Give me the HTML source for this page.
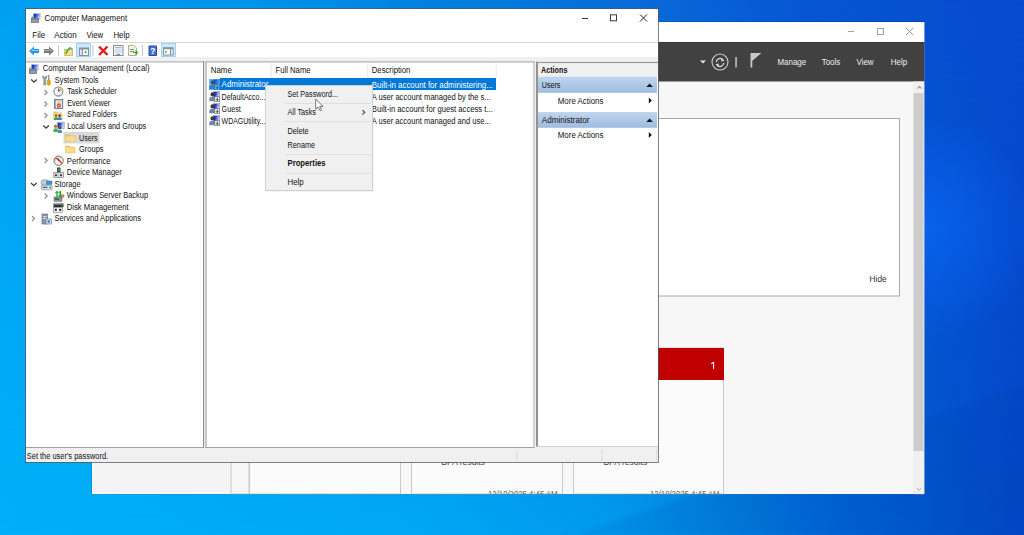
<!DOCTYPE html>
<html><head><meta charset="utf-8"><style>*{margin:0;padding:0}html,body{width:1024px;height:535px;overflow:hidden;background:#0090e8}svg{display:block;font-family:"Liberation Sans",sans-serif}</style></head>
<body><svg width="1024" height="535" viewBox="0 0 1024 535" font-family="Liberation Sans">
<defs>
<linearGradient id="bgb" gradientUnits="userSpaceOnUse" x1="0" y1="0" x2="1024" y2="0">
<stop offset="0" stop-color="#00b0f8"/><stop offset="0.39" stop-color="#00a8f4"/><stop offset="0.6" stop-color="#009aee"/><stop offset="0.7" stop-color="#0084e2"/><stop offset="0.82" stop-color="#0066d6"/><stop offset="1" stop-color="#0448c8"/></linearGradient>
<linearGradient id="bgt" gradientUnits="userSpaceOnUse" x1="0" y1="0" x2="1024" y2="0">
<stop offset="0" stop-color="#00a0f0"/><stop offset="0.24" stop-color="#0094ea"/><stop offset="0.5" stop-color="#0078dc"/><stop offset="0.64" stop-color="#0868d8"/><stop offset="0.78" stop-color="#0656d2"/><stop offset="1" stop-color="#064ad0"/></linearGradient>
<linearGradient id="vg" gradientUnits="userSpaceOnUse" x1="0" y1="0" x2="0" y2="535"><stop offset="0" stop-color="#fff"/><stop offset="1" stop-color="#000"/></linearGradient>
<mask id="vm" maskUnits="userSpaceOnUse" x="0" y="0" width="1024" height="535"><rect width="1024" height="535" fill="url(#vg)"/></mask>
<radialGradient id="glow" gradientUnits="userSpaceOnUse" cx="922" cy="228" r="115">
<stop offset="0" stop-color="#0a68f8" stop-opacity="0.7"/><stop offset="1" stop-color="#0a68f8" stop-opacity="0"/></radialGradient>
<linearGradient id="sec" x1="0" y1="0" x2="0" y2="1"><stop offset="0" stop-color="#c0d6ee"/><stop offset="1" stop-color="#9ebce0"/></linearGradient>
<linearGradient id="scr" x1="0" y1="0" x2="1" y2="0.3"><stop offset="0" stop-color="#0010c8"/><stop offset="0.45" stop-color="#3050e0"/><stop offset="1" stop-color="#b8c8f4"/></linearGradient>
<filter id="blr" x="-10%" y="-10%" width="120%" height="120%"><feGaussianBlur stdDeviation="2"/></filter>
<clipPath id="smclip"><rect x="92" y="22" width="832.5" height="472.3"/></clipPath>
</defs>
<rect x="0" y="0" width="1024" height="535" fill="url(#bgb)"/>
<rect x="0" y="0" width="1024" height="535" fill="url(#bgt)" mask="url(#vm)"/>
<path d="M560 540L1024 385V535H560Z" fill="#003090" opacity="0.1" filter="url(#blr)"/>
<rect x="800" y="90" width="224" height="280" fill="url(#glow)"/>
<rect x="91.5" y="21.5" width="833" height="473" fill="none" stroke="rgba(0,0,0,0.12)" stroke-width="1"/>
<g clip-path="url(#smclip)">
<rect x="92" y="22" width="832.5" height="472.3" fill="#f7f7f7"/>
<rect x="92" y="22" width="832.5" height="20" fill="#ffffff"/>
<rect x="848" y="31" width="6" height="1" fill="#a0a0a0"/>
<rect x="877.5" y="28.5" width="6" height="6" fill="none" stroke="#a0a0a0" stroke-width="1"/>
<path d="M906 28L913 35M913 28L906 35" stroke="#909090" stroke-width="0.9"/>
<rect x="92" y="42" width="832.5" height="39.5" fill="#414141"/>
<rect x="92" y="42" width="832" height="1" fill="#363636"/>
<path d="M700 60.5H706L703 63.5Z" fill="#e6e6e6"/>
<circle cx="720" cy="62" r="8" fill="none" stroke="#cfcfcf" stroke-width="1.1"/>
<path d="M716.3 62A3.8 3.8 0 0 1 723 59.8M723.7 63A3.8 3.8 0 0 1 717 65.2" fill="none" stroke="#dcdcdc" stroke-width="1.3"/>
<path d="M721.5 58L724.6 60.7L721.2 61.5Z M718.5 67L715.4 64.3L718.8 63.5Z" fill="#dcdcdc"/>
<rect x="735.3" y="57" width="1.5" height="10.5" fill="#c8c8c8"/>
<rect x="750.5" y="53" width="1.8" height="14.5" fill="#c8c8c8"/>
<path d="M752 53H761.5L752 61Z" fill="#c8c8c8"/>
<text x="777.5" y="65" font-size="8.5" fill="#f0f0f0" textLength="28.6" lengthAdjust="spacingAndGlyphs">Manage</text>
<text x="821.8" y="65" font-size="8.5" fill="#f0f0f0" textLength="18.4" lengthAdjust="spacingAndGlyphs">Tools</text>
<text x="856.5" y="65" font-size="8.5" fill="#f0f0f0" textLength="17.1" lengthAdjust="spacingAndGlyphs">View</text>
<text x="890.7" y="65" font-size="8.5" fill="#f0f0f0" textLength="16.5" lengthAdjust="spacingAndGlyphs">Help</text>
<rect x="92" y="118.5" width="807.5" height="177.5" fill="#ffffff" stroke="#a8a8a8" stroke-width="1"/>
<text x="869.6" y="281.5" font-size="8.5" fill="#333" textLength="17.0" lengthAdjust="spacingAndGlyphs">Hide</text>
<rect x="92" y="440" width="139" height="54" fill="#f4f4f4"/>
<rect x="231" y="440" width="18" height="54" fill="#f6f6f6" stroke="#c8c8c8" stroke-width="1"/>
<rect x="249.5" y="330" width="151" height="164" fill="#fbfbfb" stroke="#c8c8c8" stroke-width="1"/>
<rect x="411.5" y="330" width="151" height="164" fill="#fbfbfb" stroke="#c8c8c8" stroke-width="1"/>
<rect x="573.5" y="348" width="150" height="146" fill="#fbfbfb" stroke="#c8c8c8" stroke-width="1"/>
<rect x="573" y="348" width="151" height="32" fill="#c00000"/>
<path d="M713.6 362V369M713.6 362.2L711.2 363.8" stroke="#fff" stroke-width="1.1" fill="none"/>
<text x="441.3" y="465" font-size="8.5" fill="#444" textLength="43.6" lengthAdjust="spacingAndGlyphs">BPA results</text>
<text x="603.6" y="465" font-size="8.5" fill="#444" textLength="43.6" lengthAdjust="spacingAndGlyphs">BPA results</text>
<text x="488" y="497" font-size="8.5" fill="#666" textLength="69.6" lengthAdjust="spacingAndGlyphs">12/10/2025 4:45 AM</text>
<text x="650" y="497" font-size="8.5" fill="#666" textLength="69.6" lengthAdjust="spacingAndGlyphs">12/10/2025 4:45 AM</text>
<rect x="913" y="81.5" width="11.5" height="413" fill="#f0f0f0"/>
<rect x="913.5" y="93" width="10" height="358" fill="#cdcdcd"/>
<path d="M917.2 88.6L919.5 86.3L921.8 88.6" fill="none" stroke="#a4a4a4" stroke-width="1.1"/>
<path d="M917 488L919.2 490.2L921.4 488" fill="none" stroke="#a0a0a0" stroke-width="0.9"/>
</g>
<rect x="25.5" y="8.5" width="633" height="454" fill="#ffffff" stroke="rgba(0,0,20,0.5)" stroke-width="1"/>
<g transform="translate(30.9,13)"><rect x="2" y="0" width="8" height="6.7" fill="#d6d2c4"/><rect x="2.8" y="0.8" width="6.4" height="5" fill="url(#scr)"/><rect x="0" y="5" width="8" height="5" rx="0.6" fill="#76808a"/><rect x="1" y="6.8" width="6" height="0.8" fill="#a8b0b8"/><rect x="1" y="8.4" width="6" height="0.8" fill="#a8b0b8"/><circle cx="1.3" cy="4.2" r="0.9" fill="#58c058"/></g>
<text x="44.5" y="21.2" font-size="9" fill="#111" textLength="82.6" lengthAdjust="spacingAndGlyphs">Computer Management</text>
<rect x="582" y="18" width="6" height="1" fill="#333"/>
<rect x="610.5" y="14.8" width="6" height="6" fill="none" stroke="#3a3a3a" stroke-width="1"/>
<path d="M640 14.5L647 21.5M647 14.5L640 21.5" stroke="#222" stroke-width="1"/>
<text x="32.3" y="37.8" font-size="8.5" fill="#111" textLength="12.8" lengthAdjust="spacingAndGlyphs">File</text>
<text x="54.3" y="37.8" font-size="8.5" fill="#111" textLength="22.4" lengthAdjust="spacingAndGlyphs">Action</text>
<text x="86.5" y="37.8" font-size="8.5" fill="#111" textLength="16.7" lengthAdjust="spacingAndGlyphs">View</text>
<text x="113.4" y="37.8" font-size="8.5" fill="#111" textLength="16.2" lengthAdjust="spacingAndGlyphs">Help</text>
<rect x="26" y="42" width="632" height="1" fill="#dadada"/>
<path d="M29 51L34 46.5V49H39V53H34V55.5Z" fill="#1e98e6"/><path d="M30.5 51L33.5 48.5V50H38.5V51Z" fill="#86ccf8"/>
<path d="M54 51L49 46.5V49H44V53H49V55.5Z" fill="#7a7a7a"/><path d="M52.5 51L49.5 48.5V50H44.5V51Z" fill="#acacac"/>
<rect x="58" y="45" width="1" height="11" fill="#c4c4c4"/>
<rect x="64" y="49" width="9" height="7" fill="#e4bc5c"/><rect x="65" y="50" width="7" height="5" fill="#f8dc98"/><path d="M66 54Q67 49.5 71 47.5" stroke="#3cb83c" stroke-width="1.8" fill="none"/><rect x="71" y="48" width="1.5" height="1.5" fill="#4aa0e0"/>
<rect x="76.5" y="43.5" width="14" height="13" fill="#cce8ff" stroke="#99d1ff" stroke-width="1"/>
<rect x="79" y="47.5" width="10" height="8.5" fill="#8c9198"/><rect x="80" y="49.5" width="2" height="5.5" fill="#dde4ec"/><rect x="83" y="49.5" width="5" height="5.5" fill="#fff"/><path d="M84.2 52.2L86.4 50.6V53.8Z" fill="#2ca82c"/>
<rect x="92.5" y="45" width="1" height="11" fill="#c4c4c4"/>
<path d="M99 46.5L107.5 55M107.5 46.5L99 55" stroke="#e41a1a" stroke-width="2.4"/>
<rect x="113.5" y="45.5" width="9.5" height="10" fill="#f2f4f6" stroke="#8c8c8c" stroke-width="1"/><rect x="115" y="47" width="6.5" height="1.2" fill="#a8b0c0"/><rect x="115" y="49" width="6.5" height="4.5" fill="#d4e2f0"/><rect x="116.5" y="54" width="3.5" height="1.2" fill="#3aa0e0"/>
<path d="M128.5 45.5H134L136.5 48V55.5H128.5Z" fill="#f6f2de" stroke="#b4ac94" stroke-width="1"/><rect x="130" y="49" width="4" height="1" fill="#888"/><rect x="130" y="51" width="4" height="1" fill="#888"/><path d="M133 52H135.5V50L138.5 52.5L135.5 55V53H133Z" fill="#30b030"/>
<rect x="142" y="45" width="1" height="11" fill="#c4c4c4"/>
<rect x="148.5" y="45.5" width="8.5" height="10.5" rx="1" fill="#2646b0"/><rect x="149.5" y="46.5" width="6.5" height="8.5" fill="#4a6fd6"/><text x="152.8" y="54" font-size="8.5" font-family="Liberation Sans" font-weight="bold" fill="#fff" text-anchor="middle">?</text>
<rect x="161.5" y="43.5" width="14" height="13" fill="#cce8ff" stroke="#99d1ff" stroke-width="1"/>
<rect x="163" y="47.2" width="10.6" height="8.3" fill="#8c9198"/><rect x="164" y="49.2" width="6" height="5.3" fill="#fff"/><rect x="171" y="49.2" width="1.8" height="5.3" fill="#dde4ec"/><path d="M165.2 50.5L167.2 51.9L165.2 53.3Z" fill="#2ca82c"/>
<rect x="26" y="57" width="632" height="5" fill="#f0f0f0"/>
<rect x="26" y="62" width="632" height="386" fill="#f0f0f0"/>
<rect x="26" y="61.5" width="178" height="386" fill="#ffffff"/>
<rect x="26" y="61" width="178" height="1.7" fill="#c8c8cc"/>
<rect x="203" y="61" width="1.1" height="387" fill="#8a8a90"/>
<rect x="204.1" y="61" width="1.1" height="387" fill="#e8e8e8"/>
<rect x="26" y="447" width="178" height="1" fill="#a0a0a0"/>
<rect x="205.2" y="61.5" width="329.3" height="386" fill="#ffffff"/>
<rect x="205.2" y="61" width="329" height="1.7" fill="#c4c4c8"/>
<rect x="205.2" y="61" width="1.6" height="387" fill="#b8b8c0"/>
<rect x="533.5" y="61" width="1" height="387" fill="#a8a8a8"/>
<rect x="205.2" y="447" width="329" height="1" fill="#a0a0a0"/>
<rect x="536" y="61.5" width="122" height="385" fill="#ffffff"/>
<rect x="536" y="61.8" width="122" height="1.5" fill="#9a9a9a"/>
<rect x="536" y="61.8" width="2" height="385" fill="#929292"/>
<rect x="537" y="446" width="121" height="1" fill="#cfcfcf"/>
<rect x="26" y="448" width="632" height="14" fill="#f0f0f0"/>
<text x="26.8" y="458.8" font-size="8.5" fill="#111" textLength="81.3" lengthAdjust="spacingAndGlyphs">Set the user&#39;s password.</text>
<rect x="516.5" y="449" width="1" height="12" fill="#dcdcdc"/>
<rect x="601.5" y="449" width="1" height="12" fill="#dcdcdc"/>
<rect x="656" y="449" width="1" height="12" fill="#dcdcdc"/>
<g transform="translate(28.9,64)"><rect x="2" y="0" width="8" height="6.7" fill="#d6d2c4"/><rect x="2.8" y="0.8" width="6.4" height="5" fill="url(#scr)"/><rect x="0" y="5" width="8" height="5" rx="0.6" fill="#76808a"/><rect x="1" y="6.8" width="6" height="0.8" fill="#a8b0b8"/><rect x="1" y="8.4" width="6" height="0.8" fill="#a8b0b8"/><circle cx="1.3" cy="4.2" r="0.9" fill="#58c058"/></g>
<text x="42.7" y="71.4" font-size="8.5" fill="#111" textLength="106.8" lengthAdjust="spacingAndGlyphs">Computer Management (Local)</text>
<path d="M31.2 79.5L34.0 82.2L36.8 79.5" fill="none" stroke="#3a3a3a" stroke-width="1.3"/>
<g transform="translate(42.5,75)"><path d="M0.3 0.5V2.5Q0.3 3.5 1.3 3.8V10H3.2V3.8Q4.2 3.5 4.2 2.5V0.5L3.2 1.5V2.3H1.3V1.5Z" fill="#9aa2aa" stroke="#6a727a" stroke-width="0.5"/><rect x="5.6" y="0" width="1.3" height="5" fill="#8a8f96"/><rect x="4.8" y="4.8" width="3" height="5.4" rx="1" fill="#f0a800" stroke="#b07800" stroke-width="0.4"/></g>
<text x="54.8" y="82.9" font-size="8.5" fill="#111" textLength="43.7" lengthAdjust="spacingAndGlyphs">System Tools</text>
<path d="M44.5 90L47.0 92.5L44.5 95" fill="none" stroke="#8e8e8e" stroke-width="1.2"/>
<circle cx="58.4" cy="91.5" r="4.5" fill="#fafafa" stroke="#9a9ea6" stroke-width="1.3"/><path d="M58.4 87.6A3.9 3.9 0 0 1 62.3 91.5H58.4Z" fill="#f2d070" opacity="0.85"/><path d="M58.4 88.4V91.5L60.6 89.6" stroke="#404040" stroke-width="0.75" fill="none"/>
<text x="67.2" y="94" font-size="8.5" fill="#111" textLength="49.6" lengthAdjust="spacingAndGlyphs">Task Scheduler</text>
<path d="M44.5 101.5L47.0 104.0L44.5 106.5" fill="none" stroke="#8e8e8e" stroke-width="1.2"/>
<rect x="54.6" y="99.4" width="8.2" height="9.2" fill="#8ea2c6" stroke="#5a6a94" stroke-width="0.7"/><rect x="55.9" y="100.4" width="6" height="7.4" fill="#e6ecf6"/><path d="M58.9 100.6L61.2 104.4H56.6Z" fill="#f0c030"/><circle cx="58.9" cy="105.7" r="2" fill="#e03a3a"/><rect x="57.9" y="105.4" width="2" height="0.7" fill="#fff"/>
<text x="67.2" y="105.8" font-size="8.5" fill="#111" textLength="43.1" lengthAdjust="spacingAndGlyphs">Event Viewer</text>
<path d="M44.5 113L47.0 115.5L44.5 118" fill="none" stroke="#8e8e8e" stroke-width="1.2"/>
<path d="M53.3 111.5H56.5L57.5 112.5H62.3V120H53.3Z" fill="#e8c460"/><rect x="53.9" y="113.1" width="7.8" height="6.3" fill="#f8dc92"/><circle cx="56" cy="115.6" r="1.3" fill="#8a5a30"/><circle cx="59.6" cy="115.6" r="1.3" fill="#6a4428"/><path d="M54 120V118.6Q54 117.2 56 117.2Q58 117.2 58 118.6V120Z" fill="#3aa848"/><path d="M57.6 120V118.6Q57.6 117.2 59.6 117.2Q61.6 117.2 61.6 118.6V120Z" fill="#3a86d4"/>
<text x="67.2" y="117.2" font-size="8.5" fill="#111" textLength="49.6" lengthAdjust="spacingAndGlyphs">Shared Folders</text>
<path d="M43.3 125.5L46.099999999999994 128.2L48.9 125.5" fill="none" stroke="#3a3a3a" stroke-width="1.3"/>
<rect x="57.2" y="122.2" width="7" height="6.3" fill="#d8dce4" stroke="#8a92a4" stroke-width="0.6"/><rect x="57.9" y="122.9" width="5.6" height="4.9" fill="url(#scr)"/><circle cx="55.6" cy="126.2" r="1.7" fill="#b07a48"/><path d="M53.4 132V130Q53.4 128.2 55.6 128.2Q57.8 128.2 57.8 130V132Z" fill="#48b048"/><circle cx="59.8" cy="127.6" r="1.6" fill="#704830"/><path d="M57.6 133V131.2Q57.6 129.5 59.8 129.5Q62 129.5 62 131.2V133Z" fill="#4a8ad8"/>
<text x="67.2" y="128.7" font-size="8.5" fill="#111" textLength="79.1" lengthAdjust="spacingAndGlyphs">Local Users and Groups</text>
<rect x="63.5" y="132" width="36" height="11.5" fill="#d9d9d9"/>
<path d="M65.3 134.6H69.3L70.3 135.6H75.3V142.1H65.3Z" fill="#e6c15e"/><rect x="65.89999999999999" y="136.2" width="8.8" height="5.3" fill="#f8dc8c"/>
<text x="79" y="140.5" font-size="8.5" fill="#111" textLength="18.6" lengthAdjust="spacingAndGlyphs">Users</text>
<path d="M65.3 145.8H69.3L70.3 146.8H75.3V153.3H65.3Z" fill="#e6c15e"/><rect x="65.89999999999999" y="147.4" width="8.8" height="5.3" fill="#f8dc8c"/>
<text x="79" y="152" font-size="8.5" fill="#111" textLength="24.6" lengthAdjust="spacingAndGlyphs">Groups</text>
<path d="M44.7 158L47.2 160.5L44.7 163" fill="none" stroke="#8e8e8e" stroke-width="1.2"/>
<circle cx="58.6" cy="160.7" r="4.7" fill="#f8f8f8" stroke="#707070" stroke-width="1"/><path d="M55.5 161.5A3.2 3.2 0 0 1 61.5 159" stroke="#7ac080" stroke-width="0.7" fill="none"/><path d="M55.6 157.6L58.4 160.2L58 158.6L61.8 163.6" stroke="#e02020" stroke-width="1.2" fill="none"/>
<text x="66.8" y="163.8" font-size="8.5" fill="#111" textLength="43.8" lengthAdjust="spacingAndGlyphs">Performance</text>
<rect x="57" y="167.5" width="3.5" height="5" fill="#3a3a3a"/><rect x="58" y="168.5" width="1.5" height="2.5" fill="#3cc040"/><rect x="53.8" y="172.5" width="9.6" height="5" fill="#d0d0d0" stroke="#777" stroke-width="0.6"/><rect x="55" y="174.5" width="2" height="1.5" fill="#333"/><rect x="60" y="174.5" width="2" height="1.5" fill="#333"/>
<text x="66.8" y="175" font-size="8.5" fill="#111" textLength="55.0" lengthAdjust="spacingAndGlyphs">Device Manager</text>
<path d="M31 183L33.8 185.7L36.6 183" fill="none" stroke="#3a3a3a" stroke-width="1.3"/>
<rect x="41.2" y="179.8" width="7.5" height="5.6" rx="2.5" fill="#c4ccd4" stroke="#7a8490" stroke-width="0.6"/><rect x="46.6" y="181" width="5.4" height="3.6" rx="0.8" fill="#3a94dc" stroke="#2a6aa8" stroke-width="0.5"/><rect x="41.2" y="185.2" width="11" height="4.6" rx="1" fill="#d8dee4" stroke="#7a8490" stroke-width="0.6"/><rect x="42.5" y="186.8" width="5" height="1.2" fill="#5a6470"/><circle cx="50.3" cy="187.5" r="0.9" fill="#3cb040"/>
<text x="54.5" y="186.8" font-size="8.5" fill="#111" textLength="26.1" lengthAdjust="spacingAndGlyphs">Storage</text>
<path d="M44.7 193.5L47.2 196.0L44.7 198.5" fill="none" stroke="#8e8e8e" stroke-width="1.2"/>
<rect x="54" y="197" width="8" height="4.3" fill="#8e969e" stroke="#5a626a" stroke-width="0.5"/><rect x="55" y="198.6" width="4" height="1" fill="#333"/><path d="M56.2 197.5V193H54.6L57 190.4L59.4 193H57.8V197.5Z" fill="#38b838"/><path d="M59.4 191V195.6H57.9L60.3 198.2L62.7 195.6H61.1V191Z" fill="#2ea02e"/><circle cx="62.6" cy="196" r="1.6" fill="#c89050" stroke="#666" stroke-width="0.4"/>
<text x="66.8" y="198.3" font-size="8.5" fill="#111" textLength="81.3" lengthAdjust="spacingAndGlyphs">Windows Server Backup</text>
<rect x="53.5" y="203.5" width="10" height="3.8" rx="0.6" fill="#2e2e2e"/><rect x="54.3" y="204.1" width="8.4" height="0.9" fill="#8a8a8a"/><rect x="61.3" y="205.5" width="1.4" height="1" fill="#3cc040"/><rect x="53.5" y="207.3" width="9" height="5" fill="#f2f2f2" stroke="#7a7a7a" stroke-width="0.6"/><rect x="54.8" y="208.8" width="2" height="2" fill="#222"/><rect x="59.2" y="208.8" width="2" height="2" fill="#222"/>
<text x="66.8" y="209.5" font-size="8.5" fill="#111" textLength="61.8" lengthAdjust="spacingAndGlyphs">Disk Management</text>
<path d="M32 216L34.5 218.5L32 221" fill="none" stroke="#8e8e8e" stroke-width="1.2"/>
<rect x="42" y="214" width="5.5" height="10" fill="#8898a8" stroke="#5a6878" stroke-width="0.6"/><rect x="43" y="216" width="3.5" height="1" fill="#dde"/><rect x="43" y="218" width="3.5" height="1" fill="#dde"/><rect x="46" y="219" width="5.5" height="5" fill="#d8e0e8" stroke="#6a7888" stroke-width="0.6"/><circle cx="48.8" cy="221.5" r="1.3" fill="#2a80d0"/>
<text x="54.5" y="221.3" font-size="8.5" fill="#111" textLength="86.6" lengthAdjust="spacingAndGlyphs">Services and Applications</text>
<text x="210.8" y="73.3" font-size="8.5" fill="#111" textLength="21.0" lengthAdjust="spacingAndGlyphs">Name</text>
<rect x="270.5" y="62" width="1" height="16" fill="#e5e5e5"/>
<text x="275.5" y="73.3" font-size="8.5" fill="#111" textLength="35.1" lengthAdjust="spacingAndGlyphs">Full Name</text>
<rect x="367.3" y="62" width="1" height="16" fill="#e5e5e5"/>
<text x="371.8" y="73.3" font-size="8.5" fill="#111" textLength="38.6" lengthAdjust="spacingAndGlyphs">Description</text>
<rect x="495.6" y="62" width="1" height="16" fill="#e5e5e5"/>
<rect x="220" y="78" width="276" height="12" fill="#0078d7"/>
<g transform="translate(209,79)"><rect x="4.3" y="0.3" width="6.4" height="7.2" fill="#e4e8ee" stroke="#8890a0" stroke-width="0.6"/><rect x="5" y="1" width="5" height="5.6" fill="url(#scr)"/><circle cx="3.6" cy="3.4" r="2.1" fill="#4a3428"/><path d="M0.3 10.3V8Q0.3 5.8 3.6 5.8Q6.9 5.8 6.9 8V10.3Z" fill="#7088a8"/><rect x="5.8" y="5.8" width="4.9" height="4.9" fill="#fafafa" stroke="#606060" stroke-width="0.6"/><path d="M8.25 6.6V9.4M7 8.3L8.25 9.6L9.5 8.3" stroke="#111" stroke-width="0.8" fill="none"/><rect x="0" y="0" width="11" height="11" fill="#0078d7" opacity="0.55"/></g>
<g transform="translate(209,91)"><rect x="4.3" y="0.3" width="6.4" height="7.2" fill="#e4e8ee" stroke="#8890a0" stroke-width="0.6"/><rect x="5" y="1" width="5" height="5.6" fill="url(#scr)"/><circle cx="3.6" cy="3.4" r="2.1" fill="#4a3428"/><path d="M0.3 10.3V8Q0.3 5.8 3.6 5.8Q6.9 5.8 6.9 8V10.3Z" fill="#7088a8"/><rect x="5.8" y="5.8" width="4.9" height="4.9" fill="#fafafa" stroke="#606060" stroke-width="0.6"/><path d="M8.25 6.6V9.4M7 8.3L8.25 9.6L9.5 8.3" stroke="#111" stroke-width="0.8" fill="none"/></g>
<g transform="translate(209,103)"><rect x="4.3" y="0.3" width="6.4" height="7.2" fill="#e4e8ee" stroke="#8890a0" stroke-width="0.6"/><rect x="5" y="1" width="5" height="5.6" fill="url(#scr)"/><circle cx="3.6" cy="3.4" r="2.1" fill="#4a3428"/><path d="M0.3 10.3V8Q0.3 5.8 3.6 5.8Q6.9 5.8 6.9 8V10.3Z" fill="#7088a8"/><rect x="5.8" y="5.8" width="4.9" height="4.9" fill="#fafafa" stroke="#606060" stroke-width="0.6"/><path d="M8.25 6.6V9.4M7 8.3L8.25 9.6L9.5 8.3" stroke="#111" stroke-width="0.8" fill="none"/></g>
<g transform="translate(209,115)"><rect x="4.3" y="0.3" width="6.4" height="7.2" fill="#e4e8ee" stroke="#8890a0" stroke-width="0.6"/><rect x="5" y="1" width="5" height="5.6" fill="url(#scr)"/><circle cx="3.6" cy="3.4" r="2.1" fill="#4a3428"/><path d="M0.3 10.3V8Q0.3 5.8 3.6 5.8Q6.9 5.8 6.9 8V10.3Z" fill="#7088a8"/><rect x="5.8" y="5.8" width="4.9" height="4.9" fill="#fafafa" stroke="#606060" stroke-width="0.6"/><path d="M8.25 6.6V9.4M7 8.3L8.25 9.6L9.5 8.3" stroke="#111" stroke-width="0.8" fill="none"/></g>
<text x="221.6" y="87.4" font-size="8.5" fill="#ffffff" textLength="46.7" lengthAdjust="spacingAndGlyphs">Administrator</text>
<text x="221.6" y="99.8" font-size="8.5" fill="#111" textLength="43.8" lengthAdjust="spacingAndGlyphs">DefaultAcco...</text>
<text x="221.6" y="111.6" font-size="8.5" fill="#111" textLength="19.2" lengthAdjust="spacingAndGlyphs">Guest</text>
<text x="221.6" y="123.9" font-size="8.5" fill="#111" textLength="43.8" lengthAdjust="spacingAndGlyphs">WDAGUtility...</text>
<text x="371.8" y="87.7" font-size="8.5" fill="#ffffff" textLength="121.0" lengthAdjust="spacingAndGlyphs">Built-in account for administering...</text>
<text x="371.8" y="100" font-size="8.5" fill="#111" textLength="118.9" lengthAdjust="spacingAndGlyphs">A user account managed by the s...</text>
<text x="371.8" y="112" font-size="8.5" fill="#111" textLength="121.0" lengthAdjust="spacingAndGlyphs">Built-in account for guest access t...</text>
<text x="371.8" y="124.4" font-size="8.5" fill="#111" textLength="118.9" lengthAdjust="spacingAndGlyphs">A user account managed and use...</text>
<rect x="266" y="87" width="108" height="105" fill="#000" opacity="0.04"/>
<rect x="265.5" y="85.5" width="107" height="105" fill="#f0f0f1" stroke="#d0d0d0" stroke-width="1"/>
<text x="287.5" y="96.6" font-size="8.5" fill="#111" textLength="50.4" lengthAdjust="spacingAndGlyphs">Set Password...</text>
<rect x="285" y="103" width="86" height="1" fill="#e0e0e0"/>
<text x="287.5" y="114.8" font-size="8.5" fill="#111" textLength="28.5" lengthAdjust="spacingAndGlyphs">All Tasks</text>
<path d="M362.4 110.1L364.8 112.3L362.4 114.6" fill="none" stroke="#505050" stroke-width="1.2"/>
<rect x="285" y="121" width="86" height="1" fill="#e0e0e0"/>
<text x="287.5" y="133.8" font-size="8.5" fill="#111" textLength="21.1" lengthAdjust="spacingAndGlyphs">Delete</text>
<text x="287.5" y="147.7" font-size="8.5" fill="#111" textLength="27.6" lengthAdjust="spacingAndGlyphs">Rename</text>
<rect x="285" y="154" width="86" height="1" fill="#e0e0e0"/>
<text x="287.5" y="166" font-size="8.5" fill="#111" font-weight="bold" textLength="38.1" lengthAdjust="spacingAndGlyphs">Properties</text>
<rect x="285" y="172.8" width="86" height="1" fill="#e0e0e0"/>
<text x="287.5" y="184.7" font-size="8.5" fill="#111" textLength="16.2" lengthAdjust="spacingAndGlyphs">Help</text>
<path d="M315.7 99.2V109.2L318.1 107L320 110.6L321.5 109.9L319.7 106.4H323Z" fill="#fff" stroke="#4a4a4a" stroke-width="0.75" stroke-linejoin="round"/>
<rect x="538" y="63.3" width="120" height="12.8" fill="#f0f0f0"/>
<text x="540.9" y="72.8" font-size="8.5" fill="#111" font-weight="bold" textLength="26.6" lengthAdjust="spacingAndGlyphs">Actions</text>
<rect x="538" y="76.5" width="119" height="16.3" fill="url(#sec)"/>
<text x="541.8" y="87.6" font-size="8.5" fill="#111" textLength="18.6" lengthAdjust="spacingAndGlyphs">Users</text>
<path d="M646.3 87L649.6 83.4L652.9 87Z" fill="#111"/>
<text x="557.8" y="103.5" font-size="8.5" fill="#111" textLength="45.6" lengthAdjust="spacingAndGlyphs">More Actions</text>
<path d="M648.8 97.5L651.8 100.5L648.8 103.5Z" fill="#111"/>
<rect x="538" y="112" width="119" height="15.8" fill="url(#sec)"/>
<text x="541.8" y="122.8" font-size="8.5" fill="#111" textLength="47.6" lengthAdjust="spacingAndGlyphs">Administrator</text>
<path d="M646.3 122L649.6 118.4L652.9 122Z" fill="#111"/>
<text x="557.8" y="137.7" font-size="8.5" fill="#111" textLength="45.6" lengthAdjust="spacingAndGlyphs">More Actions</text>
<path d="M648.8 132L651.8 135L648.8 138Z" fill="#111"/>
</svg></body></html>
